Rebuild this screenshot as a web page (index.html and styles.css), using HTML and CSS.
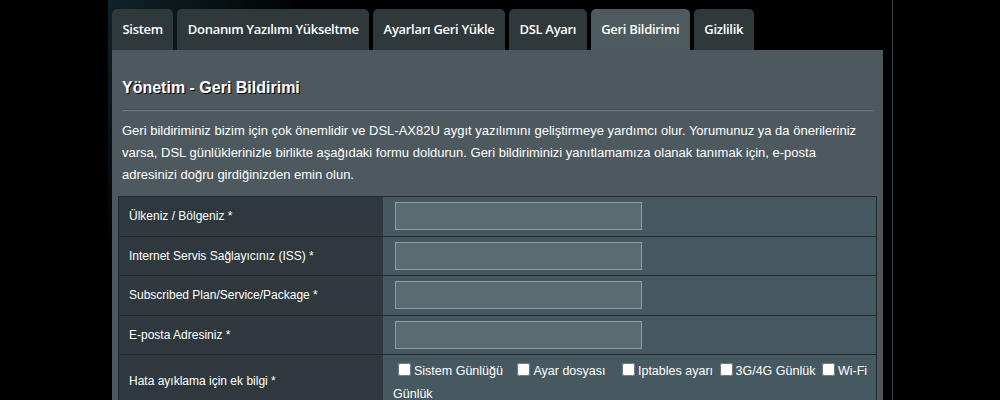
FILE: index.html
```html
<!DOCTYPE html>
<html lang="tr">
<head>
<meta charset="utf-8">
<title>Yönetim - Geri Bildirimi</title>
<link rel="stylesheet" href="styles.css">
</head>
<body>
<div class="wrap">
  <div class="main">
    <div class="tabs">
      <div class="tab">Sistem</div>
      <div class="tab">Donanım Yazılımı Yükseltme</div>
      <div class="tab">Ayarları Geri Yükle</div>
      <div class="tab">DSL Ayarı</div>
      <div class="tab active">Geri Bildirimi</div>
      <div class="tab">Gizlilik</div>
    </div>
    <div class="panel">
      <div class="title">Yönetim - Geri Bildirimi</div>
      <div class="divider"></div>
      <p class="desc">Geri bildiriminiz bizim için çok önemlidir ve DSL-AX82U aygıt yazılımını geliştirmeye yardımcı olur. Yorumunuz ya da önerileriniz varsa, DSL günlüklerinizle birlikte aşağıdaki formu doldurun. Geri bildiriminizi yanıtlamamıza olanak tanımak için, e-posta adresinizi doğru girdiğinizden emin olun.</p>
      <table class="form">
        <tr>
          <th>Ülkeniz / Bölgeniz *</th>
          <td><input class="field" type="text"></td>
        </tr>
        <tr>
          <th>Internet Servis Sağlayıcınız (ISS) *</th>
          <td><input class="field" type="text"></td>
        </tr>
        <tr>
          <th>Subscribed Plan/Service/Package *</th>
          <td><input class="field" type="text"></td>
        </tr>
        <tr>
          <th>E-posta Adresiniz *</th>
          <td><input class="field" type="text"></td>
        </tr>
        <tr class="tall">
          <th>Hata ayıklama için ek bilgi *</th>
          <td class="checks"><span class="opt gap-a"><input type="checkbox">Sistem Günlüğü</span><span class="opt gap-b"><input type="checkbox">Ayar dosyası</span><span class="opt"><input type="checkbox">Iptables ayarı</span><span class="opt"><input type="checkbox">3G/4G Günlük</span><span class="opt-last"><input type="checkbox">Wi-Fi</span> <span>Günlük</span></td>
        </tr>
      </table>
    </div>
  </div>
</div>
</body>
</html>
```

FILE: styles.css
```css
html, body {
  margin: 0;
  padding: 0;
  background: #000;
  height: 100%;
  overflow: hidden;
}

.wrap {
  margin-left: 108px;
  width: 784px;
  min-height: 400px;
  border-right: 1px solid #3a3d3e;
  background: radial-gradient(ellipse 200px 260px at 0 0, #10232a 0%, #071114 55%, #000 100%);
}

.main {
  padding: 9px 0 0 4px;
  width: 771px;
}

.tabs {
  display: flex;
  gap: 4px;
  height: 41px;
}

.tab {
  background: #2f383b;
  color: #fff;
  font-family: "Open Sans", "DejaVu Sans", sans-serif;
  font-weight: 600;
  font-size: 13px;
  letter-spacing: -0.3px;
  line-height: 41px;
  padding: 0 10.5px;
  border-radius: 5px 5px 0 0;
  white-space: nowrap;
}

.tab.active {
  background: #4d5a5e;
}

.panel {
  background: #4d595e;
  padding: 26px 6px 20px 6px;
  min-height: 400px;
}

.title {
  margin: 0 4px;
  font-family: "Liberation Sans", Arial, sans-serif;
  font-weight: bold;
  font-size: 16px;
  color: #fff;
  text-shadow: 1px 1px 0 #000;
  line-height: 23px;
}

.divider {
  margin: 10px 4px 0 4px;
  height: 1px;
  background: #6e7a7f;
  border-top: 1px solid #434e52;
}

.desc {
  margin: 9px 4px 10px 4px;
  font-family: "Liberation Sans", Arial, sans-serif;
  font-size: 13px;
  line-height: 22px;
  color: #fff;
}

.form {
  width: 759px;
  border-collapse: collapse;
  border: 1px solid #222a2d;
  font-family: "Liberation Sans", Arial, sans-serif;
  font-size: 12px;
  color: #fff;
}

.form tr {
  height: 39.5px;
}

.form th {
  width: 254px;
  text-align: left;
  font-weight: normal;
  background: #2f393d;
  padding: 0 0 0 10px;
  border: 1px solid #222a2d;
  border-right: none;
}

.form td {
  background: #475960;
  padding: 0 0 0 12px;
  border: 1px solid #222a2d;
  border-left: none;
}

.field {
  display: block;
  box-sizing: border-box;
  width: 247px;
  height: 28px;
  margin: 0;
  background: #5a6c72;
  border: 1px solid #8d9da2;
  color: #fff;
}

.form tr.tall {
  height: 50px;
}

.form tr.tall th {
  padding-bottom: 4px;
}

.form td.checks {
  padding: 5px 8px 4px 10px;
  text-indent: 2px;
  font-size: 12.5px;
  line-height: 23px;
  vertical-align: top;
}

.checks input {
  width: 13px;
  height: 13px;
  margin: 0 3px 0 3px;
  vertical-align: -1px;
}

.opt {
  margin-right: 3.5px;
}

.opt.gap-a {
  margin-right: 11.5px;
}

.opt.gap-b {
  margin-right: 13.5px;
}
```
